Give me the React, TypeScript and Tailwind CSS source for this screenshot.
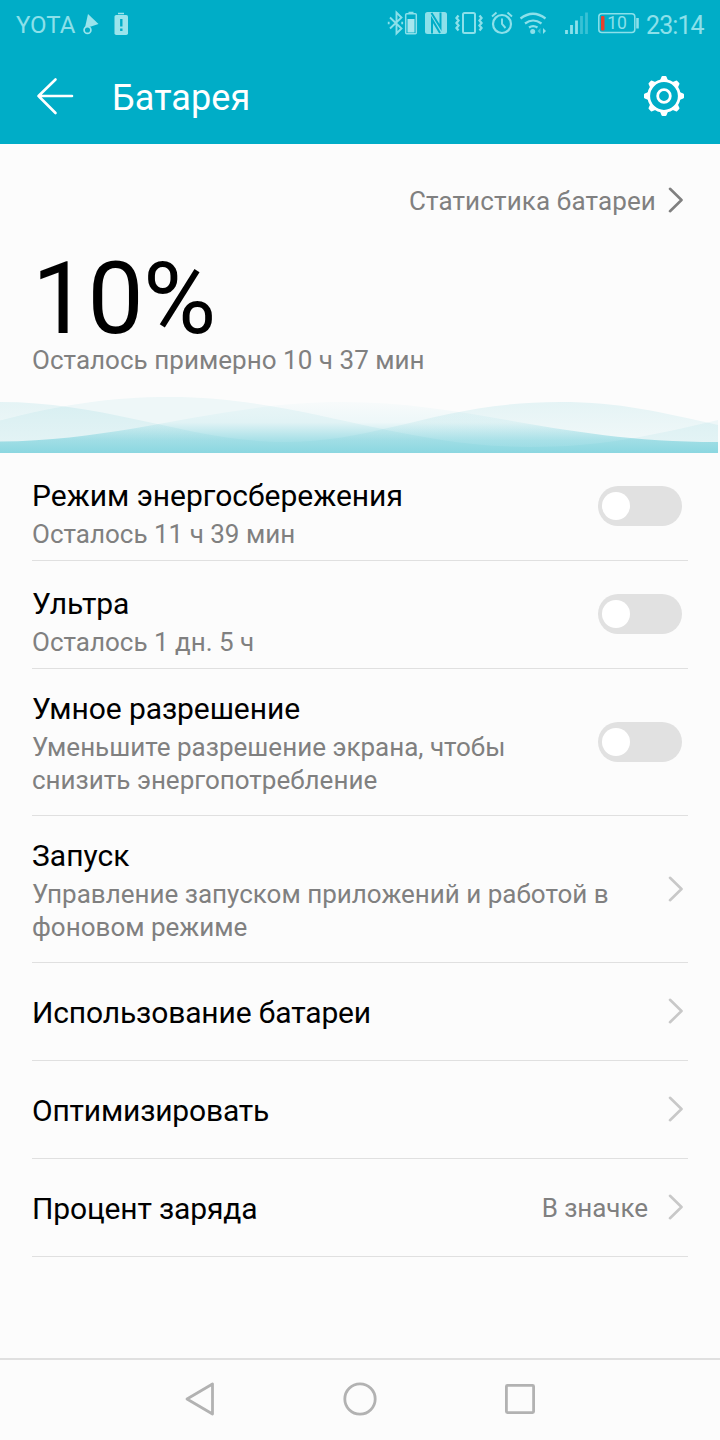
import type { ReactNode } from 'react';
import clsx from 'clsx';

type Item = {
  title: string;
  desc?: string;
  value?: string;
  kind: 'switch' | 'link';
  height: string;
  bodyClass?: string;
  titleClass?: string;
};

const items: Item[] = [
  { title: 'Режим энергосбережения', desc: 'Осталось 11 ч 39 мин', kind: 'switch', height: 'h-[108px]', bodyClass: 'pt-[12px]' },
  { title: 'Ультра', desc: 'Осталось 1 дн. 5 ч', kind: 'switch', height: 'h-[108px]', bodyClass: 'pt-[12px]', titleClass: 'tracking-[-0.15px]' },
  { title: 'Умное разрешение', desc: 'Уменьшите разрешение экрана, чтобы снизить энергопотребление', kind: 'switch', height: 'h-[147px]', bodyClass: 'pt-[1px]', titleClass: 'tracking-[-0.08px]' },
  { title: 'Запуск', desc: 'Управление запуском приложений и работой в фоновом режиме', kind: 'link', height: 'h-[147px]', bodyClass: 'pt-[1px]' },
  { title: 'Использование батареи', kind: 'link', height: 'h-[98px]', bodyClass: 'pt-[2px]', titleClass: 'tracking-[-0.14px]' },
  { title: 'Оптимизировать', kind: 'link', height: 'h-[98px]', bodyClass: 'pt-[2px]', titleClass: 'tracking-[-0.18px]' },
  { title: 'Процент заряда', value: 'В значке', kind: 'link', height: 'h-[98px]', bodyClass: 'pt-[2px]', titleClass: 'tracking-[-0.15px]' },
];

function StatusIcons() {
  return (
    <svg width="260" height="50" viewBox="380 0 260 50" fill="none" stroke="#8ce0ea" className="shrink-0">
      {/* bluetooth + device charge */}
      <path d="M390 18.500l11.500 11-5 5V13.500l5 5-11.500 11" strokeWidth="1.900" />
      <path d="M388.700 22.800v2.400M402.200 22.800v2.400" strokeWidth="1.800" />
      <rect x="405.700" y="14.700" width="10.600" height="20" rx="1" strokeWidth="1.500" />
      <path d="M408.500 13.500h5" strokeWidth="1.500" />
      <path d="M407.500 20h7v13.500h-7z" fill="#a6e6ee" stroke="none" />
      {/* nfc */}
      <rect x="425" y="13" width="22" height="22" rx="2.500" fill="#8ce0ea" stroke="none" />
      <path d="M432 34.500V20.500L440 34M431.500 14L440.500 28.500V13.500" stroke="#00adc7" strokeWidth="2" />
      {/* vibrate */}
      <rect x="463" y="14" width="12" height="20" rx="1.500" strokeWidth="2" />
      <path d="M458.500 16.500l-2 2.500 2 2.500-2 2.500 2 2.500-2 2.500 2 2.500M479.500 16.500l2 2.500-2 2.500 2 2.500-2 2.500 2 2.500-2 2.500" strokeWidth="2.300" />
      {/* alarm */}
      <circle cx="502" cy="25" r="9" strokeWidth="2.200" />
      <path d="M502 19.500v5.500l3.500 4M492 17.500l4.500-4M512 17.500l-4.500-4" strokeWidth="1.900" />
      {/* wifi */}
      <path d="M520.500 19.500q12.500-9.500 25 0M525 24.500q8-6 16.500 0M529 28.500q4-2.800 8.500 0" strokeWidth="2.200" />
      <circle cx="532.700" cy="32.500" r="2.500" fill="#8ce0ea" stroke="none" />
      <path d="M540.500 29v6l-3-3z" fill="#8ce0ea" stroke="none" opacity=".5" />
      <path d="M543 29v6l3-3z" fill="#8ce0ea" stroke="none" />
      {/* signal */}
      <path d="M566.500 31v4M571.500 26v9M576.500 21.500v13.500" strokeWidth="2.800" />
      <path d="M581.500 17v18M586.500 13.500v21.500" strokeWidth="2.800" opacity=".4" />
      {/* battery */}
      <rect x="598.800" y="14.800" width="36" height="18.700" rx="3" strokeWidth="1.500" />
      <rect x="601" y="17" width="3.500" height="14.500" rx="1" fill="#e8402c" stroke="none" />
      <path d="M637.500 19v10.500" strokeWidth="2.600" />
      <text x="607.200" y="30" fontSize="17.500" fontFamily="Roboto, sans-serif" fill="#8ce0ea" stroke="none">10</text>
    </svg>
  );
}

function StatusBar() {
  return (
    <div className="flex h-12 items-center px-4 text-[24px] leading-none text-[#8ce0ea]">
      <span className="w-[60px] whitespace-nowrap pt-[1px]">YOTA</span>
      <svg width="60" height="50" viewBox="76 0 60 50" fill="none" className="shrink-0">
        <path d="M88 15l10.500 10-7.500 2.500-6 1z" fill="#9be4ec" />
        <circle cx="87.500" cy="31" r="3.400" fill="#00adc7" stroke="#9be4ec" strokeWidth="1.700" />
        <rect x="114.500" y="16" width="13.500" height="20" rx="1.800" fill="#9be4ec" />
        <path d="M118 14.500h6" stroke="#9be4ec" strokeWidth="1.500" />
        <path d="M121.300 20v7.500M121.300 29.500v2.500" stroke="#00adc7" strokeWidth="2.400" />
      </svg>
      <div className="ml-auto flex items-center">
        <StatusIcons />
        <span className="ml-[6px] w-[58px] whitespace-nowrap pt-[2px] text-[25px] tracking-[-0.9px]">23:14</span>
      </div>
    </div>
  );
}

function GearIcon() {
  const angles = [0, 45, 90, 135, 180, 225, 270, 315];
  return (
    <svg width="40" height="40" viewBox="-20 -20 40 40" fill="none" stroke="#fff">
      <circle r="15.300" strokeWidth="2.800" />
      <circle r="6.300" strokeWidth="2.800" />
      {angles.map((a) => (
        <path key={a} d="M-4-15.500L-2.500-19.200Q-2.200-20 -1.500-20H1.500Q2.200-20 2.500-19.200L4-15.500z" fill="#fff" stroke="none" transform={`rotate(${a})`} />
      ))}
    </svg>
  );
}

function Header() {
  return (
    <div className="flex h-24 items-center px-9 text-white">
      <svg width="38" height="38" viewBox="0 0 38 38" fill="none" stroke="#fff" strokeWidth="2.600" strokeLinecap="round" strokeLinejoin="round">
        <path d="M19.500 2.500L2.500 19l17 17M2.500 19H36" />
      </svg>
      <h1 className="ml-[38px] pt-[3px] text-[36px] leading-none tracking-[0.1px]">Батарея</h1>
      <div className="ml-auto">
        <GearIcon />
      </div>
    </div>
  );
}

function Chevron({ color }: { color: string }) {
  return (
    <svg width="18" height="26" viewBox="0 0 18 26" fill="none" stroke={color} strokeWidth="2.600" strokeLinecap="round" strokeLinejoin="round" className="block shrink-0">
      <path d="M3 1.800L14.500 13 3 24.200" />
    </svg>
  );
}

function Waves() {
  return (
    <svg width="718" height="63" viewBox="0 390 718 63" className="block">
      <defs>
        <linearGradient id="front" gradientUnits="userSpaceOnUse" x1="0" x2="0" y1="402" y2="453">
          <stop offset="0" stopColor="#12b0c4" stopOpacity=".02" />
          <stop offset=".4" stopColor="#12b0c4" stopOpacity=".06" />
          <stop offset=".75" stopColor="#12b0c4" stopOpacity=".32" />
          <stop offset="1" stopColor="#12b0c4" stopOpacity=".42" />
        </linearGradient>
        <linearGradient id="middle" gradientUnits="userSpaceOnUse" x1="0" x2="0" y1="402" y2="442">
          <stop offset="0" stopColor="#12a8b8" stopOpacity=".1" />
          <stop offset="1" stopColor="#12a8b8" stopOpacity=".05" />
        </linearGradient>
      </defs>
      <path fill="#12a8b8" fillOpacity=".06" d="M0 420.500C60 405 110 397 170 397C300 397 400 447 530 447C600 447 650 436 718 420V453H0z" />
      <path fill="url(#middle)" d="M0 402C110 402 190 442 285 442C380 442 440 402 560 402C620 402 660 412 718 425V453H0z" />
      <path fill="url(#front)" d="M0 441.500C130 440 220 402 342 402C470 402 560 442 718 442V453H0z" />
    </svg>
  );
}

function Summary() {
  return (
    <section className="flex h-[309px] flex-col">
      <div className="flex h-[113px] items-center justify-end pr-[35px] text-[26px] text-[#808080]">
        <span className="pt-[2px] tracking-[0.14px]">Статистика батареи</span>
        <span className="ml-[11px] pb-[1px]">
          <Chevron color="#808080" />
        </span>
      </div>
      <div className="pl-8">
        <div className="h-[84px] text-[100px] leading-[84px] tracking-[-0.7px] text-black">10%</div>
        <div className="text-[26px] leading-[38px] tracking-[0.03px] text-[#808080]">Осталось примерно 10 ч 37 мин</div>
      </div>
      <div className="mt-auto">
        <Waves />
      </div>
    </section>
  );
}

function Switch() {
  return (
    <button role="switch" aria-checked="false" className="mr-[6px] flex h-10 w-[84px] shrink-0 items-center rounded-full bg-[#e1e1e1] pl-1">
      <span className="h-7 w-7 rounded-full bg-white" />
    </button>
  );
}

function Row({ item, children }: { item: Item; children: ReactNode }) {
  return (
    <li className={clsx('flex items-center border-b border-[#e0e0e0]', item.height)}>
      <div className={clsx('min-w-0 flex-1', item.bodyClass)}>
        <div className={clsx('text-[30px] leading-[42px] text-black', item.titleClass)}>{item.title}</div>
        {item.desc && <div className="max-w-[590px] pt-[1px] text-[26px] leading-[33px] text-[#808080]">{item.desc}</div>}
      </div>
      {item.value && <span className="mr-[19px] pt-[2px] text-[26px] tracking-[-0.05px] text-[#808080]">{item.value}</span>}
      {children}
    </li>
  );
}

function NavBar() {
  return (
    <nav className="mt-auto flex h-[82px] items-center justify-center border-t-2 border-[#e0e0e0]">
      <svg width="360" height="40" viewBox="180 1380 360 40" fill="none" stroke="#b2b2b2" strokeWidth="2.800" strokeLinejoin="round">
        <path d="M212.500 1384v30L187 1399z" />
        <circle cx="360" cy="1399" r="15.200" />
        <rect x="506.400" y="1385.400" width="27.200" height="27.200" rx="1" />
      </svg>
    </nav>
  );
}

export default function App() {
  return (
    <div className="flex h-[1440px] w-[720px] flex-col overflow-hidden bg-[#fcfcfc] font-[Roboto,sans-serif]">
      <header className="h-36 bg-[#00adc7]">
        <StatusBar />
        <Header />
      </header>
      <Summary />
      <ul className="px-8">
        {items.map((item) => (
          <Row key={item.title} item={item}>
            {item.kind === 'switch' ? (
              <span className={item.height === 'h-[108px]' ? 'pb-[2px]' : ''}>
                <Switch />
              </span>
            ) : (
              <span className={clsx('mr-[3px]', !item.desc && 'pb-[2px]')}>
                <Chevron color="#c8c8c8" />
              </span>
            )}
          </Row>
        ))}
      </ul>
      <NavBar />
    </div>
  );
}
